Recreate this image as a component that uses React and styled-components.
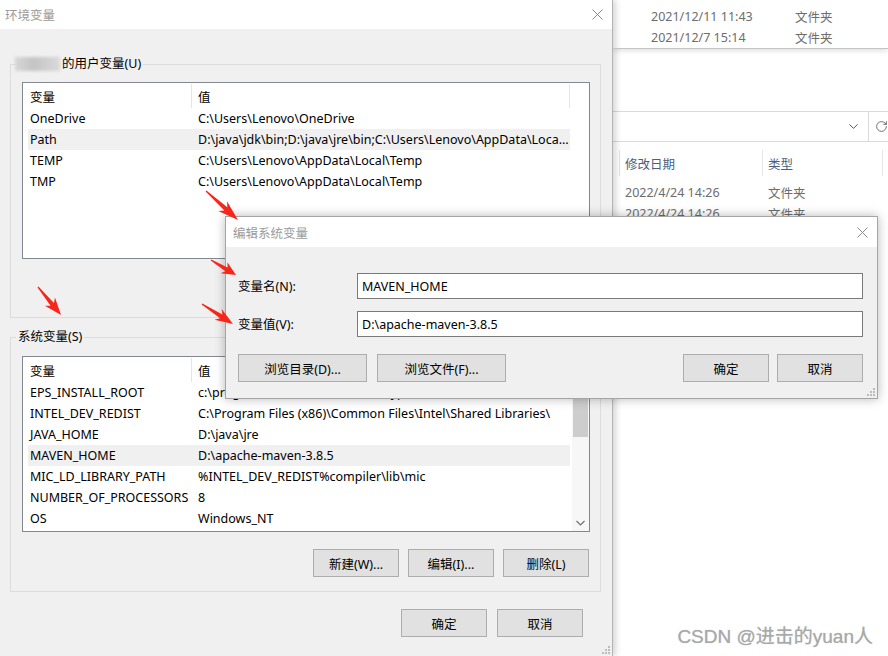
import React from 'react';
import styled, { createGlobalStyle } from 'styled-components';
import { ChevronDown, RotateCw } from 'lucide-react';

const GlobalStyle = createGlobalStyle`
  html, body { margin: 0; padding: 0; }
  body {
    width: 888px;
    height: 656px;
    overflow: hidden;
    background: #fff;
    font-family: "Noto Sans", "Noto Sans CJK SC", sans-serif;
    font-size: 12.5px;
    color: #000;
  }
`;

const Desktop = styled.div`
  position: relative;
  width: 888px;
  height: 656px;
  display: flex;
  overflow: hidden;
`;

// ---------- main window ----------
const Window = styled.div`
  position: relative;
  z-index: 1;
  flex: none;
  width: 613px;
  height: 656px;
  box-sizing: border-box;
  display: flex;
  flex-direction: column;
  background: #f0f0f0;
  border-right: 1px solid #b4b4b4;
  box-shadow: 3px 0 6px rgba(0, 0, 0, 0.16);
`;

const TitleBar = styled.div`
  height: ${p => p.$h}px;
  flex: none;
  display: flex;
  align-items: center;
  justify-content: space-between;
  padding: 0 9px 0 ${p => p.$pl}px;
  background: #fff;
  color: #9a9a9a;
  font-size: 12.5px;
`;

const Group = styled.fieldset`
  margin: ${p => p.$top}px 0 0 10px;
  padding: 0;
  width: 591px;
  min-width: 0;
  box-sizing: border-box;
  border: 1px solid #dcdcdc;
`;

const Legend = styled.legend`
  margin-left: 5px;
  padding: 0 2px;
  height: 18px;
  line-height: 18px;
  display: flex;
  align-items: center;
  color: #000;
`;

const Blurred = styled.span`
  display: inline-block;
  width: 45px;
  height: 14px;
  margin: 0 2px 0 -3px;
  background: linear-gradient(90deg, #d6d6d6, #c4c4c4 40%, #cfcfcf 70%, #dadada);
  filter: blur(1.6px);
`;

const GroupInner = styled.div`
  padding: ${p => p.$pt}px 10px ${p => p.$pb}px 11px;
  display: flex;
  flex-direction: column;
`;

const List = styled.div`
  height: ${p => p.$h}px;
  box-sizing: border-box;
  background: #fff;
  border: 1px solid #828790;
  display: flex;
  overflow: hidden;
`;

const ListBody = styled.div`
  flex: 1;
  padding-left: 5px;
  min-width: 0;
`;

const HeaderRow = styled.div`
  display: flex;
  height: 25px;
  padding-top: 1px;
  box-sizing: border-box;
`;

const HeadCell = styled.div`
  width: ${p => p.$w}px;
  box-sizing: border-box;
  padding-left: ${p => p.$pl}px;
  border-right: 1px solid #e5e5e5;
  display: flex;
  align-items: center;
  flex: none;
`;

const Row = styled.div`
  display: flex;
  width: 542px;
  height: 21px;
  align-items: center;
  background: ${p => (p.$sel ? '#f0f0f0' : 'transparent')};
`;

const Cell = styled.div`
  width: ${p => p.$w}px;
  box-sizing: border-box;
  padding-left: ${p => p.$pl}px;
  flex: none;
  white-space: nowrap;
  overflow: hidden;
  text-overflow: ellipsis;
`;

const Scrollbar = styled.div`
  width: 17px;
  flex: none;
  display: flex;
  flex-direction: column;
  background: #f7f7f7;
`;

const ScrollArrow = styled.div`
  height: 17px;
  flex: none;
  display: flex;
  align-items: center;
  justify-content: center;
`;

const Thumb = styled.div`
  height: 63px;
  margin: 0 1px;
  background: #cdcdcd;
  flex: none;
`;

const Track = styled.div`
  flex: 1;
`;

const ButtonRow = styled.div`
  display: flex;
  justify-content: flex-end;
  gap: ${p => p.$gap}px;
  margin-top: ${p => p.$mt}px;
  padding-right: ${p => p.$pr || 0}px;
`;

const Button = styled.button`
  width: ${p => p.$w}px;
  height: 28px;
  box-sizing: border-box;
  background: #e1e1e1;
  border: 1px solid #adadad;
  border-radius: 0;
  font-family: inherit;
  font-size: 12.5px;
  color: #000;
  padding: 0;
`;

const Grip = styled.div`
  position: absolute;
  right: 2px;
  bottom: 2px;
  display: flex;
`;

// ---------- edit dialog ----------
const Dialog = styled.div`
  position: absolute;
  left: 225px;
  top: 216px;
  z-index: 3;
  width: 653px;
  box-sizing: border-box;
  background: #f0f0f0;
  border: 1px solid #a5a5a5;
  box-shadow: 0 0 10px rgba(0, 0, 0, 0.28);
  display: flex;
  flex-direction: column;
`;

const DialogBody = styled.div`
  padding: 26px 14px 16px 12px;
  display: flex;
  flex-direction: column;
`;

const FieldRow = styled.div`
  display: flex;
  align-items: center;
  margin-top: ${p => p.$mt}px;
`;

const Label = styled.label`
  width: 119px;
  flex: none;
  margin-top: -2px;
`;

const Input = styled.div`
  flex: 1;
  height: 26px;
  box-sizing: border-box;
  border: 1px solid #7a7a7a;
  background: #fff;
  padding-left: 4px;
  display: flex;
  align-items: center;
`;

const Split = styled.div`
  display: flex;
  justify-content: space-between;
  margin-top: 17px;
`;

// ---------- explorer behind ----------
const Explorer = styled.div`
  flex: 1;
  min-width: 0;
  display: flex;
  flex-direction: column;
  background: #fff;
  color: #6d6d6d;
  overflow: hidden;
`;

const TopWin = styled.div`
  height: 49px;
  flex: none;
  box-sizing: border-box;
  padding-top: 6px;
  border-bottom: 1px solid #c4c4c4;
  box-shadow: 0 2px 5px rgba(0, 0, 0, 0.12);
  position: relative;
  z-index: 1;
`;

const FileRow = styled.div`
  display: flex;
  height: 21px;
  align-items: center;
  padding-left: ${p => p.$pl}px;
  white-space: nowrap;
`;

const FileCell = styled.span`
  width: ${p => p.$w}px;
  flex: none;
`;

const AddressBar = styled.div`
  margin-top: 62px;
  height: 31px;
  flex: none;
  box-sizing: border-box;
  border-top: 1px solid #dadada;
  border-bottom: 1px solid #dadada;
  display: flex;
  justify-content: flex-end;
  align-items: stretch;
  color: #555;
`;

const AddrBtn = styled.div`
  width: ${p => p.$w}px;
  flex: none;
  display: flex;
  align-items: center;
  justify-content: ${p => p.$justify || 'center'};
  padding-left: ${p => p.$pl || 0}px;
  box-sizing: border-box;
  border-left: ${p => (p.$div ? '1px solid #dadada' : 'none')};
`;

const ColHeader = styled.div`
  margin-top: 8px;
  height: 26px;
  display: flex;
  color: #4c607a;
  flex: none;
`;

const ColHead = styled.div`
  width: ${p => p.$w}px;
  flex: none;
  box-sizing: border-box;
  padding-left: 5px;
  border-right: 1px solid #e5e5e5;
  display: flex;
  align-items: center;
  white-space: nowrap;
`;

const Rows = styled.div`
  margin-top: 6px;
`;

// ---------- overlays ----------
const Annotations = styled.svg`
  position: absolute;
  left: 0;
  top: 0;
  z-index: 5;
  pointer-events: none;
`;

const Watermark = styled.div`
  position: absolute;
  right: 15px;
  bottom: 8px;
  z-index: 6;
  font-family: "Liberation Sans", "Noto Sans CJK SC", sans-serif;
  font-size: 19px;
  color: #a8a8a8;
  text-shadow: 0 0 1px rgba(80, 80, 80, 0.35);
  white-space: nowrap;
`;

const CloseX = ({ size = 11, color = '#8a8a8a' }) => (
  <svg width={size} height={size} viewBox="0 0 11 11">
    <path d="M0.5 0.5 L10.5 10.5 M10.5 0.5 L0.5 10.5" stroke={color} strokeWidth="1" />
  </svg>
);

const GripDots = () => (
  <svg width="8" height="8" viewBox="0 0 8 8">
    {[[6, 0], [3, 3], [6, 3], [0, 6], [3, 6], [6, 6]].map(([x, y]) => (
      <rect key={`${x}-${y}`} x={x} y={y} width="2" height="2" fill="#bcbcbc" />
    ))}
  </svg>
);

const SmallChevron = ({ up }) => (
  <svg width="9" height="6" viewBox="0 0 9 6">
    <path d={up ? 'M0.5 5 L4.5 1 L8.5 5' : 'M0.5 1 L4.5 5 L8.5 1'} fill="none" stroke="#707070" strokeWidth="1.2" />
  </svg>
);

const userVars = [
  ['OneDrive', 'C:\\Users\\Lenovo\\OneDrive'],
  ['Path', 'D:\\java\\jdk\\bin;D:\\java\\jre\\bin;C:\\Users\\Lenovo\\AppData\\Local\\Microsoft\\WindowsApps;', true],
  ['TEMP', 'C:\\Users\\Lenovo\\AppData\\Local\\Temp'],
  ['TMP', 'C:\\Users\\Lenovo\\AppData\\Local\\Temp'],
];

const sysVars = [
  ['EPS_INSTALL_ROOT', 'c:\\program files (x86)\\lenovo\\easyplussdk\\bin\\'],
  ['INTEL_DEV_REDIST', 'C:\\Program Files (x86)\\Common Files\\Intel\\Shared Libraries\\'],
  ['JAVA_HOME', 'D:\\java\\jre'],
  ['MAVEN_HOME', 'D:\\apache-maven-3.8.5', true],
  ['MIC_LD_LIBRARY_PATH', '%INTEL_DEV_REDIST%compiler\\lib\\mic'],
  ['NUMBER_OF_PROCESSORS', '8'],
  ['OS', 'Windows_NT'],
];

const arrows = [
  [206, 191, 238, 220],
  [211, 260, 236, 275],
  [202, 304, 233, 324],
  [38, 287, 61, 315],
];

const arrowPoints = ([x0, y0, x1, y1]) => {
  const dx = x1 - x0;
  const dy = y1 - y0;
  const L = Math.hypot(dx, dy);
  const ux = dx / L;
  const uy = dy / L;
  const nx = -uy;
  const ny = ux;
  const at = (t, w) => [x0 + ux * L * t + nx * w, y0 + uy * L * t + ny * w];
  const pts = [at(0, 0.6), at(0.62, 2.2), at(0.52, 6.5), [x1, y1], at(0.52, -6.5), at(0.62, -2.2), at(0, -0.6)];
  return pts.map(p => p.join(',')).join(' ');
};

const VarList = ({ items, height, scroll }) => (
  <List $h={height}>
    <ListBody>
      <HeaderRow>
        <HeadCell $w={164} $pl={2}>变量</HeadCell>
        <HeadCell $w={378} $pl={6}>值</HeadCell>
      </HeaderRow>
      {items.map(([name, value, sel]) => (
        <Row key={name} $sel={sel}>
          <Cell $w={164} $pl={2}>{name}</Cell>
          <Cell $w={378} $pl={6}>{value}</Cell>
        </Row>
      ))}
    </ListBody>
    {scroll && (
      <Scrollbar>
        <ScrollArrow><SmallChevron up /></ScrollArrow>
        <Thumb />
        <Track />
        <ScrollArrow><SmallChevron /></ScrollArrow>
      </Scrollbar>
    )}
  </List>
);

const ListButtons = () => (
  <ButtonRow $gap={9} $mt={17} $pr={1}>
    <Button $w={86}>新建(W)...</Button>
    <Button $w={86}>编辑(I)...</Button>
    <Button $w={86}>删除(L)</Button>
  </ButtonRow>
);

export default function App() {
  return (
    <Desktop>
      <GlobalStyle />

      <Window>
        <TitleBar $h={29} $pl={5}>
          <span>环境变量</span>
          <CloseX />
        </TitleBar>

        <Group $top={26}>
          <Legend><Blurred />的用户变量(U)</Legend>
          <GroupInner $pt={9} $pb={13}>
            <VarList items={userVars} height={177} />
            <ListButtons />
          </GroupInner>
        </Group>

        <Group $top={10}>
          <Legend>系统变量(S)</Legend>
          <GroupInner $pt={10} $pb={14}>
            <VarList items={sysVars} height={176} scroll />
            <ListButtons />
          </GroupInner>
        </Group>

        <ButtonRow $gap={10} $mt={17} $pr={29}>
          <Button $w={86}>确定</Button>
          <Button $w={86}>取消</Button>
        </ButtonRow>

        <Grip><GripDots /></Grip>
      </Window>

      <Explorer>
        <TopWin>
          <FileRow $pl={38}>
            <FileCell $w={144}>2021/12/11 11:43</FileCell>
            <FileCell $w={80}>文件夹</FileCell>
          </FileRow>
          <FileRow $pl={38}>
            <FileCell $w={144}>2021/12/7 15:14</FileCell>
            <FileCell $w={80}>文件夹</FileCell>
          </FileRow>
        </TopWin>

        <AddressBar>
          <AddrBtn $w={30}><ChevronDown size={15} strokeWidth={1.6} /></AddrBtn>
          <AddrBtn $w={20} $div $justify="flex-start" $pl={6}>
            <RotateCw size={15} strokeWidth={1.5} />
          </AddrBtn>
        </AddressBar>

        <ColHeader>
          <ColHead $w={7} />
          <ColHead $w={143}>修改日期</ColHead>
          <ColHead $w={120}>类型</ColHead>
        </ColHeader>

        <Rows>
          <FileRow $pl={12}>
            <FileCell $w={143}>2022/4/24 14:26</FileCell>
            <FileCell $w={80}>文件夹</FileCell>
          </FileRow>
          <FileRow $pl={12}>
            <FileCell $w={143}>2022/4/24 14:26</FileCell>
            <FileCell $w={80}>文件夹</FileCell>
          </FileRow>
        </Rows>
      </Explorer>

      <Dialog>
        <TitleBar $h={30} $pl={7}>
          <span>编辑系统变量</span>
          <CloseX />
        </TitleBar>
        <DialogBody>
          <FieldRow $mt={0}>
            <Label>变量名(N):</Label>
            <Input>MAVEN_HOME</Input>
          </FieldRow>
          <FieldRow $mt={12}>
            <Label>变量值(V):</Label>
            <Input>D:\apache-maven-3.8.5</Input>
          </FieldRow>
          <Split>
            <ButtonRow $gap={10} $mt={0}>
              <Button $w={129}>浏览目录(D)...</Button>
              <Button $w={129}>浏览文件(F)...</Button>
            </ButtonRow>
            <ButtonRow $gap={8} $mt={0}>
              <Button $w={86}>确定</Button>
              <Button $w={86}>取消</Button>
            </ButtonRow>
          </Split>
        </DialogBody>
        <Grip><GripDots /></Grip>
      </Dialog>

      <Annotations width="888" height="656" viewBox="0 0 888 656">
        {arrows.map(a => (
          <polygon key={a.join('-')} points={arrowPoints(a)} fill="#f5271b" />
        ))}
      </Annotations>

      <Watermark>CSDN @进击的yuan人</Watermark>
    </Desktop>
  );
}
